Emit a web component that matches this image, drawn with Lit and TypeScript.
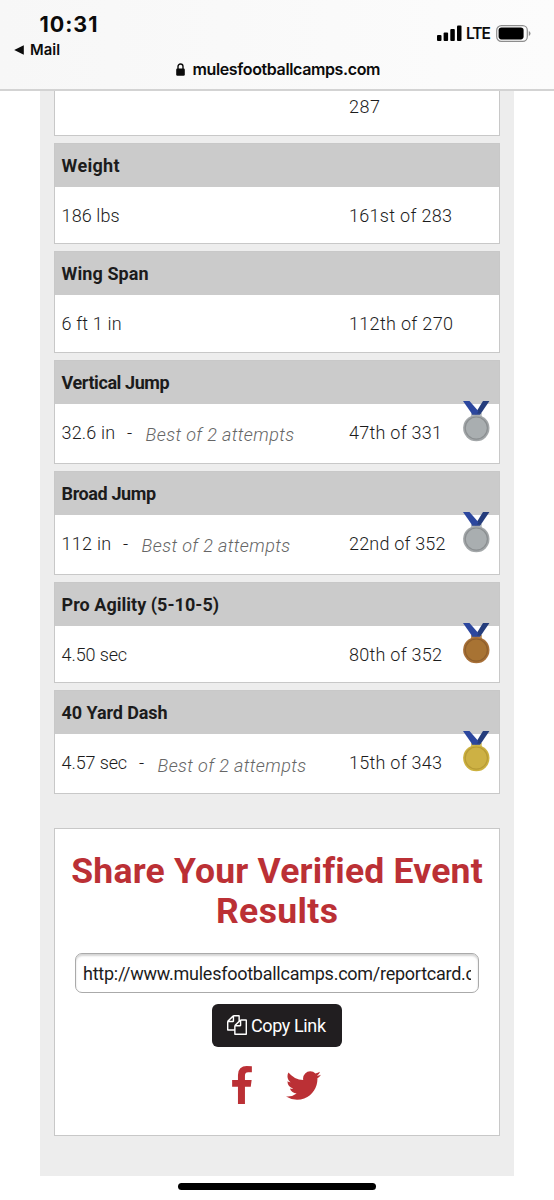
import { LitElement, html, css, svg, nothing } from "lit";
import { customElement, property } from "lit/decorators.js";

type Medal = "gold" | "silver" | "bronze";
interface Result {
  title: string;
  titleWidth: number;
  value: string;
  valueWidth: number;
  attempts?: string;
  rank: string;
  rankWidth: number;
  medal?: Medal;
}

const RESULTS: Result[] = [
  { title: "Weight", titleWidth: 58, value: "186 lbs", valueWidth: 58, rank: "161st of 283", rankWidth: 103 },
  { title: "Wing Span", titleWidth: 87, value: "6 ft 1 in", valueWidth: 60, rank: "112th of 270", rankWidth: 104 },
  { title: "Vertical Jump", titleWidth: 108, value: "32.6 in", valueWidth: 53.5, attempts: "Best of 2 attempts", rank: "47th of 331", rankWidth: 93, medal: "silver" },
  { title: "Broad Jump", titleWidth: 94.5, value: "112 in", valueWidth: 49.5, attempts: "Best of 2 attempts", rank: "22nd of 352", rankWidth: 96.5, medal: "silver" },
  { title: "Pro Agility (5-10-5)", titleWidth: 157.5, value: "4.50 sec", valueWidth: 65.5, rank: "80th of 352", rankWidth: 93, medal: "bronze" },
  { title: "40 Yard Dash", titleWidth: 106, value: "4.57 sec", valueWidth: 65.5, attempts: "Best of 2 attempts", rank: "15th of 343", rankWidth: 93, medal: "gold" },
];

const MEDAL_COLORS: Record<Medal, { face: string; ring: string; rim: string; loop: string }> = {
  silver: { face: "#a9aeb0", ring: "#8b8f91", rim: "#a3a7a9", loop: "#b9bdbf" },
  bronze: { face: "#a87333", ring: "#8f5f2b", rim: "#a87038", loop: "#b98a55" },
  gold: { face: "#cdb144", ring: "#b89b35", rim: "#ccb13f", loop: "#d3bd62" },
};

/** One line of text tracked so that it spans the given width. */
@customElement("tracked-text")
export class TrackedText extends LitElement {
  @property({ type: Number }) width = 0;
  @property() text = "";

  static styles = css`
    :host { display: inline-block; white-space: pre; }
  `;

  render() {
    return html`<span>${this.text}</span>`;
  }

  updated() {
    const span = this.renderRoot.querySelector("span")!;
    if (!this.width || this.text.length < 2) return;
    span.style.letterSpacing = "0";
    const natural = span.getBoundingClientRect().width;
    const gap = (this.width - natural) / (this.text.length - 1);
    span.style.letterSpacing = `${gap}px`;
    span.style.marginRight = `${-gap}px`;
  }
}

@customElement("status-bar")
export class StatusBar extends LitElement {
  static styles = css`
    :host {
      display: block; box-sizing: border-box; height: 91px; padding: 11px 23px 0 14px;
      background: linear-gradient(90deg, #f7f7f7, #fcfcfc); border-bottom: 2px solid #d3d3d3;
      font-family: Inter, "Liberation Sans", sans-serif; color: #0b0b0b;
    }
    .top { display: flex; justify-content: space-between; height: 48px; }
    .time { font-size: 21.5px; font-weight: 700; line-height: 26px; padding-left: 25.5px; }
    .back { display: flex; align-items: center; gap: 6px; font-size: 14.8px; font-weight: 600; line-height: 24px; margin-top: 1px; }
    .right { display: flex; align-items: flex-start; padding-top: 14px; }
    .lte { font-size: 15.5px; font-weight: 600; line-height: 17px; margin: 0 5px 0 4.5px; }
    .address { display: flex; justify-content: center; align-items: center; gap: 8px; height: 20px; padding-left: 11px; font-size: 16px; font-weight: 600; }
    svg { display: block; }
  `;

  render() {
    return html`
      <div class="top">
        <div>
          <div class="time"><tracked-text text="10:31" width="58"></tracked-text></div>
          <div class="back">
            <svg width="10" height="10" viewBox="0 0 10 10"><path d="M9.8.2v9.6L.2 5z" fill="#0b0b0b" /></svg>
            <tracked-text text="Mail" width="30"></tracked-text>
          </div>
        </div>
        <div class="right">
          <svg width="25" height="17" viewBox="0 0 25 17">
            <rect x="0" y="10" width="4.5" height="6" rx="1" />
            <rect x="6.6" y="7.5" width="4.5" height="8.5" rx="1" />
            <rect x="13.3" y="4" width="4.5" height="12" rx="1" />
            <rect x="20" y="0.5" width="4.5" height="15.5" rx="1" />
          </svg>
          <div class="lte"><tracked-text text="LTE" width="25"></tracked-text></div>
          <svg width="35" height="17" viewBox="0 0 35 17">
            <rect x="0.7" y="0.7" width="30.6" height="15.6" rx="4.6" fill="none" stroke="#8d8d8d" stroke-width="1.2" />
            <rect x="2.6" y="2.6" width="25" height="11.8" rx="2.8" />
            <path d="M32.8 6v5q1.7-.9 1.7-2.5T32.8 6z" fill="#8d8d8d" />
          </svg>
        </div>
      </div>
      <div class="address">
        <svg width="9" height="13" viewBox="0 0 9 13">
          <path d="M2 6V3.6a2.5 2.6 0 0 1 5 0V6" fill="none" stroke="#0b0b0b" stroke-width="1.4" />
          <rect x="0.2" y="5.6" width="8.6" height="7.2" rx="1.2" fill="#0b0b0b" />
        </svg>
        <tracked-text text="mulesfootballcamps.com" width="188"></tracked-text>
      </div>
    `;
  }
}

@customElement("award-medal")
export class AwardMedal extends LitElement {
  @property() kind: Medal = "gold";

  static styles = css`
    :host, svg { display: block; }
  `;

  render() {
    const c = MEDAL_COLORS[this.kind];
    return html`<svg width="28" height="41" viewBox="0 0 28 41">
      ${svg`
        <rect x="9" y="12" width="10.8" height="4" fill="${c.loop}" />
        <path d="M21 0h6.4l-9 13.2h-5.6z" fill="#253d7c" />
        <path d="M1 0h6.5l9 10.2-2 3h-4.3z" fill="#2c479f" />
        <path d="M10.3 12.4h8l-.4 1.3H9.7z" fill="#334a94" />
        <circle cx="14.3" cy="27.1" r="13.2" fill="${c.rim}" />
        <circle cx="14.3" cy="27.1" r="11.1" fill="${c.face}" stroke="${c.ring}" stroke-width="1.2" />
      `}
    </svg>`;
  }
}

@customElement("result-card")
export class ResultCard extends LitElement {
  @property({ attribute: false }) result!: Result;

  static styles = css`
    :host { display: block; position: relative; box-sizing: border-box; border: 1px solid #c8c8c8; background: #fff; }
    .head { height: 43px; line-height: 43px; padding-left: 6.6px; background: #cbcbcb; font-weight: 700; }
    .body { display: grid; grid-template-columns: 287.4px 1fr; align-items: center; height: 56.4px; line-height: 58px; padding-left: 6.6px; font-weight: 300; }
    .tall { padding-bottom: 2.4px; }
    .value { display: flex; }
    .dash { margin: 0 12px 0 10.5px; width: 8px; text-align: center; }
    .note { padding-top: 2.4px; height: 54px; color: #666; font-style: italic; }
    .medal { position: absolute; top: 40px; right: 9px; }
  `;

  render() {
    const r = this.result;
    return html`
      <div class="head"><tracked-text .text=${r.title} .width=${r.titleWidth}></tracked-text></div>
      <div class="body ${r.attempts ? "tall" : ""}">
        <div class="value">
          <tracked-text .text=${r.value} .width=${r.valueWidth}></tracked-text>
          ${r.attempts
            ? html`<span class="dash">-</span>
                <tracked-text class="note" .text=${r.attempts} .width=${148.5}></tracked-text>`
            : nothing}
        </div>
        <tracked-text .text=${r.rank} .width=${r.rankWidth}></tracked-text>
      </div>
      ${r.medal ? html`<award-medal class="medal" .kind=${r.medal}></award-medal>` : nothing}
    `;
  }
}

@customElement("share-card")
export class ShareCard extends LitElement {
  static styles = css`
    :host {
      display: flex; flex-direction: column; align-items: center; box-sizing: border-box; height: 308px;
      border: 1px solid #c8c8c8; background: #fff; padding-top: 22px;
    }
    h2 { margin: 0; display: flex; flex-direction: column; align-items: center; font-size: 35.5px; line-height: 40.4px; font-weight: 700; color: #bb3035; }
    .link {
      box-sizing: border-box; width: 404px; height: 40px; margin-top: 21px; padding: 0 7px; border: 1px solid #aaa;
      border-radius: 7px; line-height: 39px; box-shadow: inset 0 2px 2px #d4d4d4;
    }
    .clip { overflow: hidden; height: 38px; }
    button {
      display: flex; align-items: center; gap: 4px; box-sizing: border-box; width: 130px; height: 43px; margin: 11px 0 0;
      padding: 0 0 0 15px; border: 0; border-radius: 6px; background: #211e20; color: #fff; font: inherit;
    }
    .social { display: flex; align-items: flex-start; gap: 34px; margin-top: 19px; padding-right: 2px; }
    .social svg { fill: #bb3035; }
    .bird { margin-top: 5px; }
    svg { display: block; }
  `;

  render() {
    return html`
      <h2>
        <tracked-text text="Share Your Verified Event" width="411"></tracked-text>
        <tracked-text text="Results" width="122"></tracked-text>
      </h2>
      <div class="link"><div class="clip"><tracked-text text="http://www.mulesfootballcamps.com/reportcard.c" width="392"></tracked-text></div></div>
      <button>
        <svg width="20" height="20" viewBox="0 0 1792 1792" fill="#fff">
          <path d="M1696 384q40 0 68 28t28 68v1216q0 40-28 68t-68 28h-960q-40 0-68-28t-28-68v-288h-544q-40 0-68-28t-28-68v-672q0-40 20-88t48-76l408-408q28-28 76-48t88-20h416q40 0 68 28t28 68v328q68-40 128-40h416zm-544 213l-299 299h299v-299zm-640-384l-299 299h299v-299zm196 647l316-316v-416h-384v416q0 40-28 68t-68 28h-416v640h512v-256q0-40 20-88t48-76zm956 804v-1152h-384v416q0 40-28 68t-68 28h-416v640h896z" />
        </svg>
        <tracked-text text="Copy Link" width="75"></tracked-text>
      </button>
      <div class="social">
        <svg width="20" height="38" viewBox="479 0 864 1664">
          <path d="M1343 12v264h-157q-86 0-116 36t-30 108v189h293l-39 296h-254v759h-306v-759h-255v-296h255v-218q0-186 104-288.5t277-102.5q147 0 228 12z" />
        </svg>
        <svg class="bird" width="35" height="29" viewBox="108 256 1576 1280">
          <path d="M1684 408q-67 98-162 167 1 14 1 42 0 130-38 259.5t-115.5 248.5-184.5 210.5-258 146-323 54.5q-271 0-496-145 35 4 78 4 225 0 401-138-105-2-188-64.5t-114-159.5q33 5 61 5 43 0 85-11-112-23-185.5-111.5t-73.5-205.5v-4q68 38 146 41-66-44-105-115t-39-154q0-88 44-163 121 149 294.5 238.5t371.5 99.5q-8-38-8-74 0-134 94.5-228.5t228.5-94.5q140 0 236 102 109-21 205-78-37 115-142 178 93-10 186-50z" />
        </svg>
      </div>
    `;
  }
}

@customElement("app-root")
export class AppRoot extends LitElement {
  static styles = css`
    :host {
      display: flex; flex-direction: column; height: 1200px; overflow: hidden; background: #fff; color: #1c1c1c;
      font-family: Roboto, "Open Sans", sans-serif; font-size: 18px; font-weight: 400;
    }
    .panel { display: flex; flex-direction: column; gap: 7.2px; box-sizing: border-box; width: 474px; height: 1085px; margin-left: 40px; padding: 0 14px; background: #ededed; }
    .cut { box-sizing: border-box; height: 44.6px; padding: 0 0 0 294px; line-height: 32px; border: 1px solid #c8c8c8; border-top: 0; background: #fff; font-weight: 300; }
    .share { margin-top: 26.6px; }
    .home { width: 198px; height: 7px; border-radius: 4px; background: #000; margin: 6.5px 0 0 178px; }
  `;

  render() {
    return html`
      <status-bar></status-bar>
      <div class="panel">
        <div class="cut"><tracked-text text="287" width="31"></tracked-text></div>
        ${RESULTS.map((r) => html`<result-card .result=${r}></result-card>`)}
        <share-card class="share"></share-card>
      </div>
      <div class="home"></div>
    `;
  }
}
